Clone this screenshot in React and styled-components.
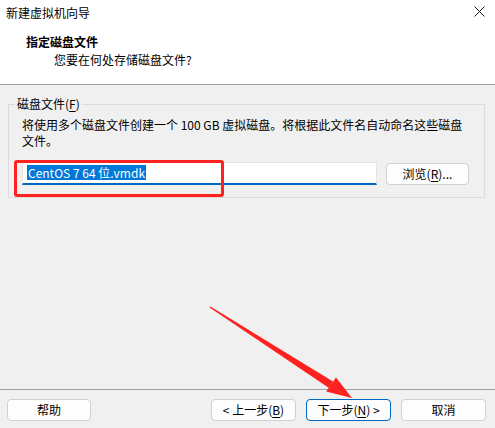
import React from "react";
import styled, { createGlobalStyle } from "styled-components";

const Global = createGlobalStyle`
  html, body { margin: 0; padding: 0; background: #f0f0f0; }
  body { font-family: "Noto Sans CJK SC", "Noto Sans", sans-serif; font-size: 12px; color: #000; }
  * { box-sizing: border-box; }
`;

const Window = styled.div`
  position: relative;
  width: 495px;
  height: 428px;
  display: flex;
  flex-direction: column;
  background: #f0f0f0;
  overflow: hidden;
`;

const TitleBar = styled.div`
  height: 26px;
  display: flex;
  align-items: center;
  justify-content: space-between;
  padding: 0 10px 0 6px;
  background: #fff;
  line-height: 16px;
  padding-bottom: 1px;
`;

const CloseIcon = styled.svg`
  width: 11px;
  height: 11px;
  margin-top: -2px;
`;

const Header = styled.div`
  background: #fff;
  padding: 7px 0 15px 26px;
  border-bottom: 1px solid #a0a0a0;
`;

const Heading = styled.div`
  font-weight: 700;
  line-height: 18px;
`;

const SubHeading = styled.div`
  line-height: 18px;
  padding-left: 28px;
`;

const Body = styled.div`
  flex: 1;
  padding: 19px 10px 0 8px;
`;

const GroupBox = styled.div`
  position: relative;
  border: 1px solid #dcdcdc;
  padding: 12px 15px 12px 13px;
`;

const Legend = styled.div`
  position: absolute;
  top: -9px;
  left: 6px;
  padding: 0 2px;
  background: #f0f0f0;
  line-height: 16px;
`;

const Description = styled.div`
  line-height: 16px;
  margin-right: -8px;
`;

const InputRow = styled.div`
  position: relative;
  display: flex;
  align-items: center;
  gap: 9px;
  margin-top: 13px;
`;

const TextField = styled.div`
  flex: 1;
  height: 23px;
  background: #fff;
  border: 1px solid #e3e3e3;
  border-bottom: 2px solid #0067c0;
  display: flex;
  align-items: center;
  padding-left: 4px;
  padding-bottom: 1px;
`;

const Selected = styled.span`
  background: #0078d7;
  color: #fff;
  line-height: 15px;
  padding: 0 1px;
`;

const Highlight = styled.div`
  position: absolute;
  left: -8px;
  top: -2px;
  width: 210px;
  height: 37px;
  border: 3px solid #ff2020;
  border-radius: 3px;
  pointer-events: none;
`;

const Button = styled.button`
  width: ${(p) => p.$w || 85}px;
  height: 22px;
  padding: 0;
  font: inherit;
  font-size: 12px;
  line-height: 16px;
  color: #000;
  background: #fdfdfd;
  border: 1px solid ${(p) => (p.$primary ? "#0067c0" : "#d0d0d0")};
  border-radius: 4px;
  display: flex;
  align-items: center;
  justify-content: center;
`;

const Key = styled.span`
  text-decoration: underline;
  text-underline-offset: 2px;
`;

const Footer = styled.div`
  height: 39px;
  border-top: 1px solid #a0a0a0;
  display: flex;
  align-items: flex-start;
  padding: 9px 9px 0 7px;
`;

const Spacer = styled.div`
  flex: 1;
`;

const ButtonGroup = styled.div`
  display: flex;
  gap: 10px;
`;

const ArrowOverlay = styled.svg`
  position: absolute;
  left: 0;
  top: 0;
  width: 495px;
  height: 428px;
  pointer-events: none;
`;

export default function App() {
  return (
    <>
      <Global />
      <Window>
        <TitleBar>
          <span>新建虚拟机向导</span>
          <CloseIcon viewBox="0 0 11 11">
            <path d="M0.5 0.5 L10.5 10.5 M10.5 0.5 L0.5 10.5" stroke="#1a1a1a" strokeWidth="1" fill="none" />
          </CloseIcon>
        </TitleBar>
        <Header>
          <Heading>指定磁盘文件</Heading>
          <SubHeading>您要在何处存储磁盘文件?</SubHeading>
        </Header>
        <Body>
          <GroupBox>
            <Legend>磁盘文件(<Key>F</Key>)</Legend>
            <Description>
              将使用多个磁盘文件创建一个 100 GB 虚拟磁盘。将根据此文件名自动命名这些磁盘
              <br />
              文件。
            </Description>
            <InputRow>
              <TextField>
                <Selected>CentOS 7 64 位.vmdk</Selected>
              </TextField>
              <Button $w={83}>
                浏览(<Key>R</Key>)...
              </Button>
              <Highlight />
            </InputRow>
          </GroupBox>
        </Body>
        <Footer>
          <Button $w={84}>帮助</Button>
          <Spacer />
          <ButtonGroup>
            <Button>
              &lt; 上一步(<Key>B</Key>)
            </Button>
            <Button $primary>
              下一步(<Key>N</Key>) &gt;
            </Button>
            <Button>取消</Button>
          </ButtonGroup>
        </Footer>
        <ArrowOverlay viewBox="0 0 495 428">
          <polygon
            points="210.4,306.4 333.0,381.6 329.0,388.0 209.6,307.6"
            fill="#ff2020"
          />
          <polygon points="352,398 326.2,391.4 336,377.6" fill="#ff2020" />
        </ArrowOverlay>
      </Window>
    </>
  );
}
